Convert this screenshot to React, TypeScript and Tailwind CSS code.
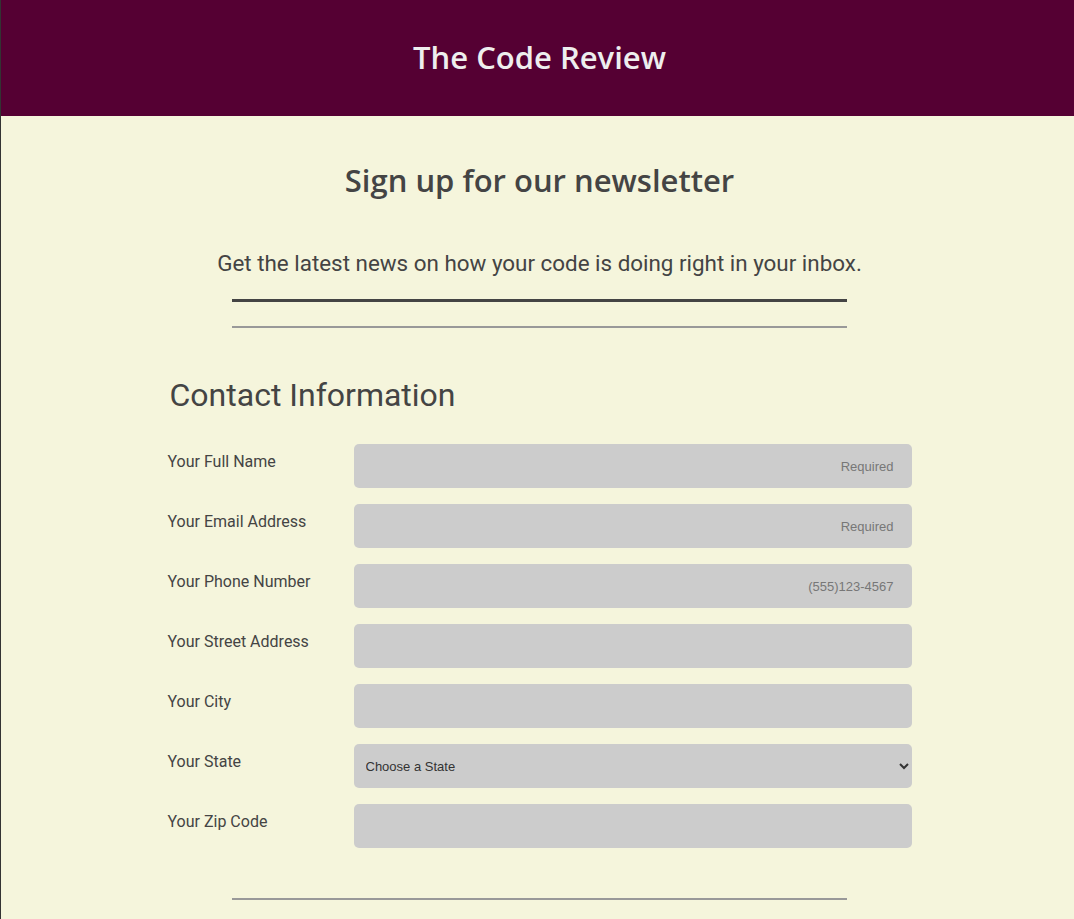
import React from "react";

const fields = [
  { label: "Your Full Name", placeholder: "Required" },
  { label: "Your Email Address", placeholder: "Required" },
  { label: "Your Phone Number", placeholder: "(555)123-4567" },
  { label: "Your Street Address", placeholder: "" },
  { label: "Your City", placeholder: "" },
];

const App = () => {
  return (
    <div className="min-h-[919px] bg-[#f5f5dc] border-l border-[#333] font-['Roboto',sans-serif] text-[#444]">
      <header className="h-[116px] bg-[#550033] flex items-center justify-center">
        <h1 className="font-['Open_Sans',sans-serif] font-semibold text-[31px] text-[#eeeeee] pl-[4px] pb-[1px]">
          The Code Review
        </h1>
      </header>

      <main className="flex flex-col items-center pl-[4px]">
        <h2 className="mt-[45px] font-['Open_Sans',sans-serif] font-semibold text-[31px] leading-[38px] text-[#444]">
          Sign up for our newsletter
        </h2>
        <p className="mt-[51px] text-[22.4px] leading-[26px]">
          Get the latest news on how your code is doing right in your inbox.
        </p>
        <div className="mt-[23px] w-[615px] h-[3px] bg-[#444]" />
        <div className="mt-[24px] w-[615px] h-[2px] bg-[#999]" />

        <form className="w-[744px] mt-[48px]">
          <h3 className="text-[32px] leading-[38px] pl-[2px]">Contact Information</h3>
          <div className="mt-[30px] flex flex-col gap-4">
            {fields.map((f) => (
              <div key={f.label} className="flex items-start">
                <label className="w-[186px] pt-[9px] text-[16px] leading-[18px]">{f.label}</label>
                <input
                  type="text"
                  placeholder={f.placeholder}
                  className="w-[558px] h-[44px] rounded-[5px] bg-[#cccccc] px-[18px] text-right text-[13px] font-['Liberation_Sans',sans-serif] placeholder:text-[#777] outline-none"
                />
              </div>
            ))}
            <div className="flex items-start">
              <label className="w-[186px] pt-[9px] text-[16px] leading-[18px]">Your State</label>
              <select className="w-[558px] h-[44px] rounded-[5px] bg-[#cccccc] pl-[8px] pr-[6px] text-[13px] text-[#333] font-['Liberation_Sans',sans-serif] outline-none">
                <option>Choose a State</option>
              </select>
            </div>
            <div className="flex items-start">
              <label className="w-[186px] pt-[9px] text-[16px] leading-[18px]">Your Zip Code</label>
              <input
                type="text"
                className="w-[558px] h-[44px] rounded-[5px] bg-[#cccccc] px-[18px] text-right text-[13px] font-['Liberation_Sans',sans-serif] outline-none"
              />
            </div>
          </div>
        </form>

        <div className="mt-[50px] w-[615px] h-[2px] bg-[#999]" />
      </main>
    </div>
  );
};

export default App;
